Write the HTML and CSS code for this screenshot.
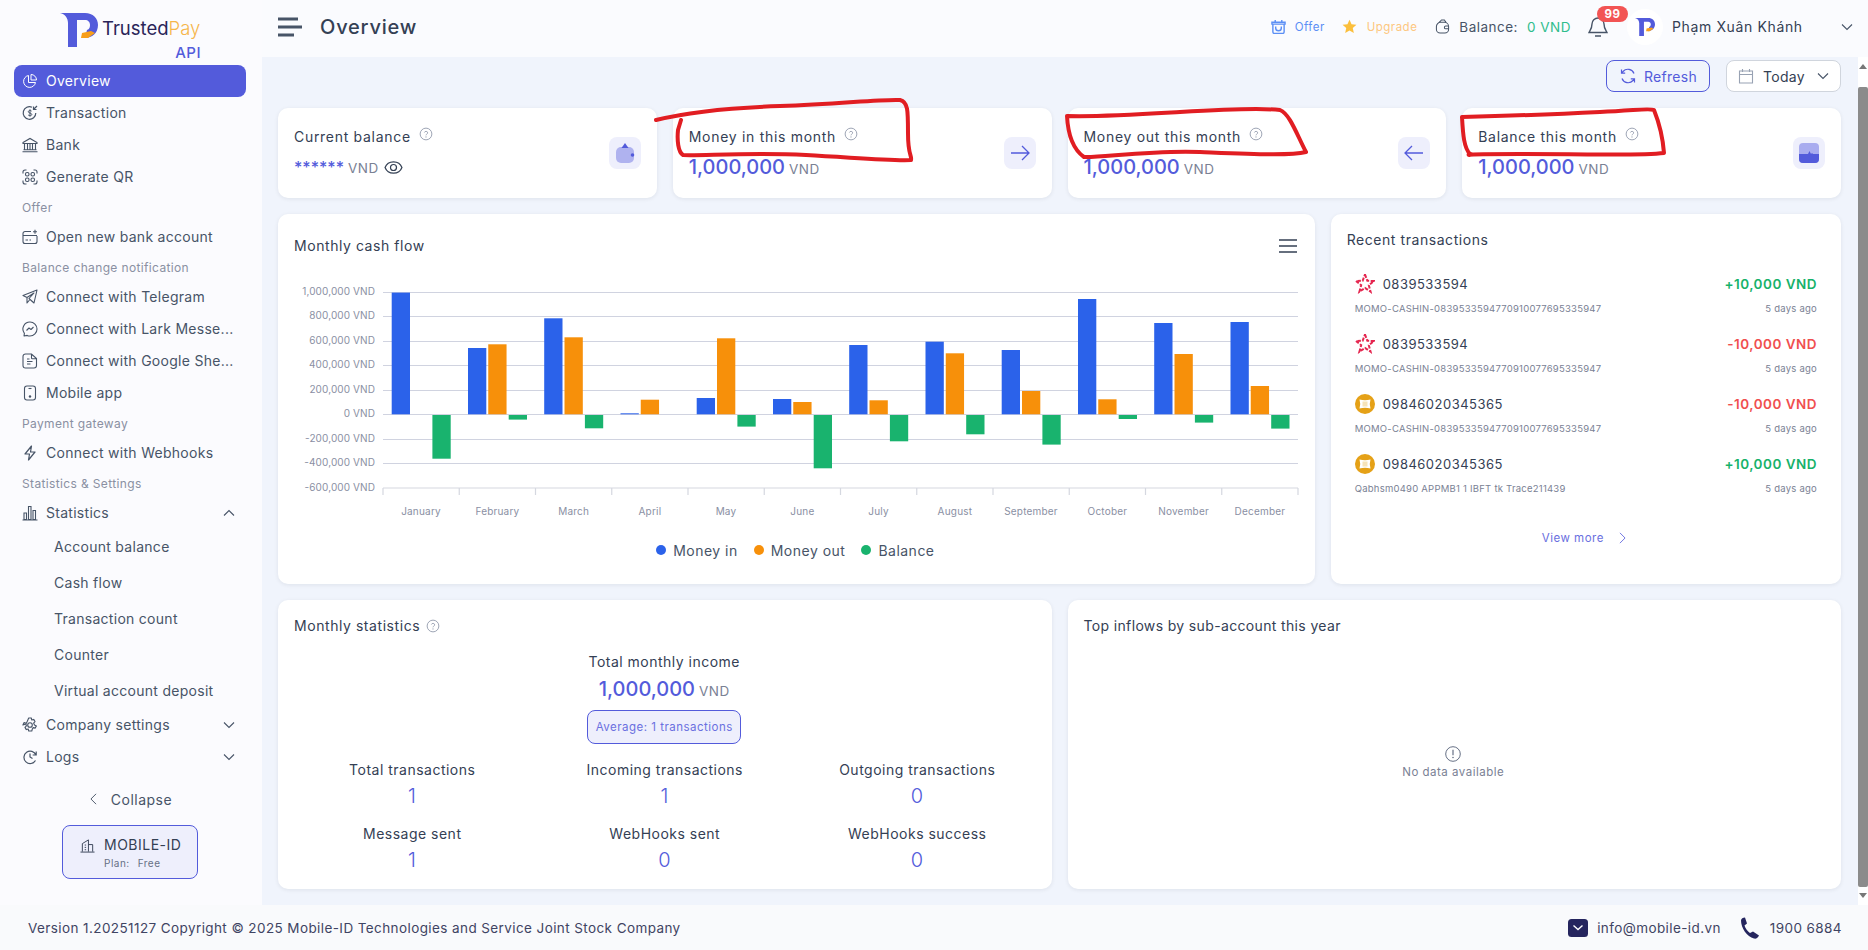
FILE: index.html
```html
<!DOCTYPE html>
<html lang="en">
<head>
<meta charset="utf-8">
<title>Overview</title>
<link rel="stylesheet" href="styles.css">
</head>
<body>
<svg class="defs" width="0" height="0" aria-hidden="true">
  <symbol id="help" viewBox="0 0 16 16"><circle cx="8" cy="8" r="6.7" fill="none" stroke="#9aa1b2" stroke-width="1.1"/><path d="M6.200 6.300a1.900 1.900 0 0 1 3.700.4c0 1.300-1.900 1.500-1.900 2.800" fill="none" stroke="#9aa1b2" stroke-width="1.1"/><circle cx="8" cy="11.400" r=".7" fill="#9aa1b2"/></symbol>
  <symbol id="chev-down" viewBox="0 0 12 12"><path d="M1 3.500l5 5 5-5" fill="none" stroke="currentColor" stroke-width="1.1"/></symbol>
  <symbol id="chev-up" viewBox="0 0 12 12"><path d="M1 8.500l5-5 5 5" fill="none" stroke="currentColor" stroke-width="1.1"/></symbol>
  <symbol id="star-bank" viewBox="0 0 20 20"><polygon points="10,.5 12.350,6.760 19.040,7.060 13.800,11.240 15.580,17.690 10,14 4.420,17.690 6.200,11.240 .96,7.060 7.650,6.760" fill="none" stroke="#e5264f" stroke-width="2" stroke-dasharray="3.500 1.500"/></symbol>
  <symbol id="gold-bank" viewBox="0 0 20 20"><circle cx="10" cy="10" r="10" fill="#e5a117"/><path d="M4.500 5.500q5.500 1.500 11 0-1.500 4.500 0 9-5.500-1.500-11 0 1.500-4.500 0-9z" fill="#fff"/><rect x="7.500" y="7.500" width="5" height="5" fill="#f6e3b8"/></symbol>
  <symbol id="logo-mark" viewBox="0 0 38 34"><path d="M0 0H25C33 0 38 5 38 12C38 20 32 25 25 25L27 17C29.500 16.500 30 14 30 12C30 9 28 7 25 7H17V34H8V10C8 5 5 1 0 0Z" fill="#535bdb"/><path d="M21 25L22 20L31 18L35 20L28 25Z" fill="#f79e1b"/></symbol>
</svg>

<div class="app">
  <aside class="sidebar">
    <div class="logo">
      <svg class="logo-icon"><use href="#logo-mark"/></svg>
      <div class="logo-words">
        <div class="logo-name">Trusted<span class="logo-pay">Pay</span></div>
        <div class="logo-api">API</div>
      </div>
    </div>
    <nav class="nav">
      <a class="nav-item active"><svg class="nav-icon" viewBox="0 0 16 16"><path d="M6.500 2.500a6 6 0 1 0 7 7H6.500z M9 1.500a5.500 5.500 0 0 1 5.500 5.500H9z" fill="none" stroke="currentColor" stroke-width="1"/></svg><span class="nav-text">Overview</span></a>
      <a class="nav-item"><svg class="nav-icon" viewBox="0 0 16 16"><path d="M10 2.200a6.300 6.300 0 1 0 3.800 5.800M15 1l-3.500 3.500M11.500 1.500v3h3" fill="none" stroke="currentColor" stroke-width="1.200"/><path d="M9.600 6.100C8.800 5.200 6.300 5.300 6.300 6.700c0 1.800 3.500 1 3.500 2.800 0 1.400-2.600 1.500-3.600.5M8 4.300v7.300" fill="none" stroke="currentColor" stroke-width="1"/></svg><span class="nav-text">Transaction</span></a>
      <a class="nav-item"><svg class="nav-icon" viewBox="0 0 16 16"><path d="M1 5.500L8 1.500l7 4v1H1zM2.500 6.500v6M5.500 6.500v6M8 6.500v6M10.500 6.500v6M13.500 6.500v6M1.500 12.800h13M.5 14.700h15" fill="none" stroke="currentColor" stroke-width="1.100"/></svg><span class="nav-text">Bank</span></a>
      <a class="nav-item"><svg class="nav-icon" viewBox="0 0 16 16"><g fill="none" stroke="currentColor" stroke-width="1.100"><path d="M1 4.500V3a2 2 0 0 1 2-2h1.500M11.500 1H13a2 2 0 0 1 2 2v1.500M15 11.500V13a2 2 0 0 1-2 2h-1.500M4.500 15H3a2 2 0 0 1-2-2v-1.500"/><rect x="3.500" y="3.500" width="3.500" height="3.500" rx="1.500"/><rect x="9" y="3.500" width="3.500" height="3.500" rx="1.500"/><rect x="3.500" y="9" width="3.500" height="3.500" rx="1.500"/><rect x="9" y="9" width="3.500" height="3.500" rx="1.500"/></g></svg><span class="nav-text">Generate QR</span></a>
      <div class="nav-label">Offer</div>
      <a class="nav-item"><svg class="nav-icon" viewBox="0 0 16 16"><path d="M9 2.500H3a2 2 0 0 0-2 2v8a2 2 0 0 0 2 2h10a2 2 0 0 0 2-2V7M1 6.500h14M13 .8v4M11 2.800h4M3.500 11h2.500M7.500 11h1.500" fill="none" stroke="currentColor" stroke-width="1.100"/></svg><span class="nav-text">Open new bank account</span></a>
      <div class="nav-label">Balance change notification</div>
      <a class="nav-item"><svg class="nav-icon" viewBox="0 0 16 16"><path d="M15 1L1 6.500l4 2L12 4 7 9.500l5 4.500zM5 8.500V14l2.500-3" fill="none" stroke="currentColor" stroke-width="1.100" stroke-linejoin="round"/></svg><span class="nav-text">Connect with Telegram</span></a>
      <a class="nav-item"><svg class="nav-icon" viewBox="0 0 16 16"><path d="M8 1a7 7 0 0 1 0 14c-1 0-2-.2-2.800-.6L2 15l.4-2.700A7 7 0 0 1 8 1zM4.500 9.500l2.500-2.500 2 1.500 2.500-2.500" fill="none" stroke="currentColor" stroke-width="1.100" stroke-linejoin="round"/></svg><span class="nav-text">Connect with Lark Messe...</span></a>
      <a class="nav-item"><svg class="nav-icon" viewBox="0 0 16 16"><path d="M3.500 1h6L14.500 5.500V12.500a2.500 2.500 0 0 1-2.500 2.500H3.500A2.500 2.500 0 0 1 1 12.500v-9A2.500 2.500 0 0 1 3.500 1zM5 6h2.500M5 8.500h5.500M5 11h3.500M9.500 1.500V5a.8.8 0 0 0 .8.8h3.700" fill="none" stroke="currentColor" stroke-width="1.100"/></svg><span class="nav-text">Connect with Google She...</span></a>
      <a class="nav-item"><svg class="nav-icon" viewBox="0 0 16 16"><rect x="2.500" y="1" width="11" height="14" rx="2.500" fill="none" stroke="currentColor" stroke-width="1.100"/><path d="M6.500 3.500h3" stroke="currentColor" stroke-width="1.100"/><circle cx="8" cy="11.500" r="1.200" fill="currentColor"/></svg><span class="nav-text">Mobile app</span></a>
      <div class="nav-label">Payment gateway</div>
      <a class="nav-item"><svg class="nav-icon" viewBox="0 0 16 16"><path d="M9.500 1L3 9h4.500l-1 6L13 7H8.500z" fill="none" stroke="currentColor" stroke-width="1.200" stroke-linejoin="round"/></svg><span class="nav-text">Connect with Webhooks</span></a>
      <div class="nav-label">Statistics &amp; Settings</div>
      <a class="nav-item"><svg class="nav-icon" viewBox="0 0 16 16"><path d="M.5 15h15M2 14.500V8h2.500v6.500zM6.500 14.500V1.500h2.500v13zM11 14.500V5.500h2.500v9z" fill="none" stroke="currentColor" stroke-width="1.100"/></svg><span class="nav-text">Statistics</span><svg class="nav-chev"><use href="#chev-up"/></svg></a>
      <a class="nav-sub">Account balance</a>
      <a class="nav-sub">Cash flow</a>
      <a class="nav-sub">Transaction count</a>
      <a class="nav-sub">Counter</a>
      <a class="nav-sub">Virtual account deposit</a>
      <a class="nav-item"><svg class="nav-icon" viewBox="0 0 16 16"><circle cx="8" cy="8" r="2.300" fill="none" stroke="currentColor" stroke-width="1.100"/><path d="M6.700 1h2.600l.5 2 1.900-.6 1.300 2.200-1.400 1.500.9 1.900 1.900.9-1.300 2.200-1.900-.5-1 1.700-.4 1.700H6.700l-.5-2-1.900.6-1.300-2.200 1.400-1.500-.5-1.900L.9 8 2.100 5.600l2.200.6 1-1.900z" fill="none" stroke="currentColor" stroke-width="1.100" stroke-linejoin="round"/></svg><span class="nav-text">Company settings</span><svg class="nav-chev"><use href="#chev-down"/></svg></a>
      <a class="nav-item"><svg class="nav-icon" viewBox="0 0 16 16"><path d="M13.500 11.500A6.200 6.200 0 1 1 13.900 6M14.200 2.500V6h-3.500M8 4.500V8l2.500 1.500" fill="none" stroke="currentColor" stroke-width="1.200"/></svg><span class="nav-text">Logs</span><svg class="nav-chev"><use href="#chev-down"/></svg></a>
    </nav>
    <div class="collapse"><svg class="collapse-chev" viewBox="0 0 8 14"><path d="M7 1L1 7l6 6" fill="none" stroke="currentColor" stroke-width="1.100"/></svg><span>Collapse</span></div>
    <div class="plan">
      <div class="plan-name"><svg class="plan-icon" viewBox="0 0 16 16"><path d="M.5 15h15M2.500 14.500V6L9 2v12.500M9 7h4.500v7.500M5 7.500h1.500M5 10h1.500M5 12.500h1.500" fill="none" stroke="currentColor" stroke-width="1"/></svg><span>MOBILE-ID</span></div>
      <div class="plan-tier"><span>Plan:</span><span>Free</span></div>
    </div>
  </aside>

  <div class="main">
    <header class="topbar">
      <svg class="burger" viewBox="0 0 24 20"><path d="M0 2h20M0 10h24M0 18h16" stroke="#475467" stroke-width="3" fill="none"/></svg>
      <h1 class="page-title">Overview</h1>
      <div class="top-right">
        <div class="top-link offer"><svg class="top-icon" viewBox="0 0 16 16"><path d="M2 5.500h12v8a2 2 0 0 1-2 2H4a2 2 0 0 1-2-2zM1 3.500h14v2H1zM4.500 3.500V1M11.500 3.500V1M5 8v1.500a3 3 0 0 0 6 0V8" fill="none" stroke="currentColor" stroke-width="1.500"/></svg><span>Offer</span></div>
        <div class="top-link upgrade"><svg class="top-icon" viewBox="0 0 16 16"><path d="M8 .8l2.200 4.800 5.200.6-3.900 3.500 1.100 5.200L8 12.300l-4.600 2.600 1.100-5.200L.6 6.200l5.200-.6z" fill="#fbbf3c"/></svg><span>Upgrade</span></div>
        <div class="top-link balance"><svg class="top-icon wallet-icon" viewBox="0 0 16 16"><path d="M1.500 8a4.500 4.500 0 0 1 4.500-4.500h4A4.500 4.500 0 0 1 14.500 8v3a4 4 0 0 1-4 4h-5a4 4 0 0 1-4-4zM4 4l3-3h3l2 3M14.500 7.500h-3a1.500 1.500 0 0 0 0 3h3" fill="none" stroke="currentColor" stroke-width="1.100"/></svg><span>Balance:</span><span class="balance-value">0 VND</span></div>
        <div class="bell">
          <svg class="bell-icon" viewBox="0 0 20 20"><path d="M10 1a6 6 0 0 1 6 6c0 5 2.500 7 3 8.500H1C1.500 14 4 12 4 7a6 6 0 0 1 6-6zM7 19h6" fill="none" stroke="#475467" stroke-width="1.400"/></svg>
          <span class="badge">99</span>
        </div>
        <div class="avatar"><svg class="avatar-logo"><use href="#logo-mark"/></svg></div>
        <div class="user-name">Phạm Xuân Khánh</div>
        <svg class="user-chev"><use href="#chev-down"/></svg>
      </div>
    </header>

    <div class="workspace">
      <main class="content">
        <div class="toolbar">
          <button class="btn btn-refresh"><svg class="btn-icon" viewBox="0 0 16 16"><path d="M14 5.500A6.500 6.500 0 0 0 3 3.500L1.500 5M2 10.500a6.500 6.500 0 0 0 11 2L14.500 11M1.500 1.500V5.200h3.700M14.500 14.500v-3.700h-3.700" fill="none" stroke="currentColor" stroke-width="1.200"/></svg><span>Refresh</span></button>
          <button class="btn btn-date"><svg class="btn-icon" viewBox="0 0 16 16"><path d="M1.500 3h13v12h-13zM1.500 6.500h13M4.500 1v3M11.500 1v3" fill="none" stroke="#98a2b3" stroke-width="1.100"/></svg><span>Today</span><svg class="date-chev"><use href="#chev-down"/></svg></button>
        </div>

        <div class="grid">
          <section class="card kpi span-3">
            <div class="kpi-body">
              <div class="kpi-title"><span>Current balance</span><svg class="help"><use href="#help"/></svg></div>
              <div class="kpi-value"><span class="stars">******</span><span class="unit">VND</span><svg class="eye" viewBox="0 0 20 16"><path d="M1 8c3-8 15-8 18 0-3 8-15 8-18 0z" fill="none" stroke="#344054" stroke-width="1.300"/><circle cx="10" cy="8" r="3.200" fill="none" stroke="#344054" stroke-width="1.300"/></svg></div>
            </div>
            <div class="kpi-icon"><svg viewBox="0 0 20 20" class="kpi-svg"><rect x="1" y="4" width="18" height="16" rx="5" fill="#afb2ef"/><path d="M6.500 5L10 0l3.500 5z" fill="#535bdb"/><circle cx="17.500" cy="12" r="1.800" fill="#535bdb"/></svg></div>
          </section>
          <section class="card kpi span-3">
            <div class="kpi-body">
              <div class="kpi-title"><span>Money in this month</span><svg class="help"><use href="#help"/></svg></div>
              <div class="kpi-value"><span class="amount">1,000,000</span><span class="unit">VND</span></div>
            </div>
            <div class="kpi-icon"><svg viewBox="0 0 20 16" class="kpi-arrow"><path d="M1 8h18M12 1l7 7-7 7" fill="none" stroke="#535bdb" stroke-width="1.300"/></svg></div>
          </section>
          <section class="card kpi span-3">
            <div class="kpi-body">
              <div class="kpi-title"><span>Money out this month</span><svg class="help"><use href="#help"/></svg></div>
              <div class="kpi-value"><span class="amount">1,000,000</span><span class="unit">VND</span></div>
            </div>
            <div class="kpi-icon"><svg viewBox="0 0 20 16" class="kpi-arrow"><path d="M19 8H1M8 1L1 8l7 7" fill="none" stroke="#535bdb" stroke-width="1.300"/></svg></div>
          </section>
          <section class="card kpi span-3">
            <div class="kpi-body">
              <div class="kpi-title"><span>Balance this month</span><svg class="help"><use href="#help"/></svg></div>
              <div class="kpi-value"><span class="amount">1,000,000</span><span class="unit">VND</span></div>
            </div>
            <div class="kpi-icon"><svg viewBox="0 0 20 20" class="kpi-pulse"><rect width="20" height="20" rx="4" fill="#a9acef"/><path d="M0 11h9l1.500-3 1.500 3 1-1 1 1h6v5a4 4 0 0 1-4 4H4a4 4 0 0 1-4-4z" fill="#535bdb"/></svg></div>
          </section>

          <section class="card chart-card span-8">
            <div class="chart-head">
              <h2 class="card-title">Monthly cash flow</h2>
              <svg class="chart-menu" viewBox="0 0 18 14"><path d="M0 1h18M0 7h18M0 13h18" stroke="#344054" stroke-width="1.700" fill="none"/></svg>
            </div>
            <svg class="chart" viewBox="278 278 1036 252">
              <g class="grid-lines">
                <path d="M383 292.500H1298M383 316.500H1298M383 341.500H1298M383 365.500H1298M383 390.500H1298M383 414.500H1298M383 439.500H1298M383 463.500H1298"/>
              </g>
              <path class="axis" d="M383 488H1298M383 488v7M459.250 488v7M535.500 488v7M611.750 488v7M688 488v7M764.250 488v7M840.500 488v7M916.750 488v7M993 488v7M1069.250 488v7M1145.500 488v7M1221.750 488v7M1298 488v7"/>
              <g class="bars-in">
                <rect x="391.700" y="292.600" width="18.300" height="121.700"/><rect x="468" y="348" width="18.300" height="66.300"/><rect x="544.200" y="318.300" width="18.300" height="96"/><rect x="620.500" y="413.300" width="18.300" height="1"/><rect x="696.700" y="398" width="18.300" height="16.300"/><rect x="773" y="399" width="18.300" height="15.300"/><rect x="849.200" y="345" width="18.300" height="69.300"/><rect x="925.500" y="341.700" width="18.300" height="72.600"/><rect x="1001.700" y="350" width="18.300" height="64.300"/><rect x="1078" y="299" width="18.300" height="115.300"/><rect x="1154.200" y="323" width="18.300" height="91.300"/><rect x="1230.500" y="322" width="18.300" height="92.300"/>
              </g>
              <g class="bars-out">
                <rect x="488.250" y="344.300" width="18.300" height="70"/><rect x="564.500" y="337.300" width="18.300" height="77"/><rect x="640.750" y="399.700" width="18.300" height="14.600"/><rect x="717" y="338.300" width="18.300" height="76"/><rect x="793.250" y="402" width="18.300" height="12.300"/><rect x="869.500" y="400.300" width="18.300" height="14"/><rect x="945.750" y="353.300" width="18.300" height="61"/><rect x="1022" y="391" width="18.300" height="23.300"/><rect x="1098.250" y="399.300" width="18.300" height="15"/><rect x="1174.500" y="354" width="18.300" height="60.300"/><rect x="1250.750" y="386" width="18.300" height="28.300"/>
              </g>
              <g class="bars-bal">
                <rect x="432.400" y="415" width="18.300" height="43.700"/><rect x="508.700" y="415" width="18.300" height="4.600"/><rect x="584.900" y="415" width="18.300" height="13.300"/><rect x="737.400" y="415" width="18.300" height="11.600"/><rect x="813.700" y="415" width="18.300" height="53.300"/><rect x="889.900" y="415" width="18.300" height="26.300"/><rect x="966.200" y="415" width="18.300" height="19.300"/><rect x="1042.400" y="415" width="18.300" height="29.600"/><rect x="1118.700" y="415" width="18.300" height="4"/><rect x="1194.900" y="415" width="18.300" height="7.600"/><rect x="1271.200" y="415" width="18.300" height="13.600"/>
              </g>
              <g class="y-labels">
                <text x="375" y="294.500">1,000,000 VND</text><text x="375" y="318.500">800,000 VND</text><text x="375" y="343.500">600,000 VND</text><text x="375" y="367.500">400,000 VND</text><text x="375" y="392.500">200,000 VND</text><text x="375" y="416.500">0 VND</text><text x="375" y="441.500">-200,000 VND</text><text x="375" y="465.500">-400,000 VND</text><text x="375" y="490.500">-600,000 VND</text>
              </g>
              <g class="x-labels">
                <text x="421" y="515">January</text><text x="497.400" y="515">February</text><text x="573.600" y="515">March</text><text x="649.900" y="515">April</text><text x="726" y="515">May</text><text x="802.400" y="515">June</text><text x="878.600" y="515">July</text><text x="954.900" y="515">August</text><text x="1031" y="515">September</text><text x="1107.400" y="515">October</text><text x="1183.600" y="515">November</text><text x="1259.900" y="515">December</text>
              </g>
            </svg>
            <div class="legend">
              <span class="legend-item"><i class="dot dot-in"></i>Money in</span>
              <span class="legend-item"><i class="dot dot-out"></i>Money out</span>
              <span class="legend-item"><i class="dot dot-bal"></i>Balance</span>
            </div>
          </section>

          <section class="card recent span-4">
            <h2 class="card-title">Recent transactions</h2>
            <ul class="tx-list">
              <li class="tx">
                <div class="tx-top"><svg class="tx-icon"><use href="#star-bank"/></svg><span class="tx-acc">0839533594</span><span class="tx-amt plus">+10,000 VND</span></div>
                <div class="tx-sub"><span>MOMO-CASHIN-0839533594770910077695335947</span><span>5 days ago</span></div>
              </li>
              <li class="tx">
                <div class="tx-top"><svg class="tx-icon"><use href="#star-bank"/></svg><span class="tx-acc">0839533594</span><span class="tx-amt minus">-10,000 VND</span></div>
                <div class="tx-sub"><span>MOMO-CASHIN-0839533594770910077695335947</span><span>5 days ago</span></div>
              </li>
              <li class="tx">
                <div class="tx-top"><svg class="tx-icon"><use href="#gold-bank"/></svg><span class="tx-acc">09846020345365</span><span class="tx-amt minus">-10,000 VND</span></div>
                <div class="tx-sub"><span>MOMO-CASHIN-0839533594770910077695335947</span><span>5 days ago</span></div>
              </li>
              <li class="tx">
                <div class="tx-top"><svg class="tx-icon"><use href="#gold-bank"/></svg><span class="tx-acc">09846020345365</span><span class="tx-amt plus">+10,000 VND</span></div>
                <div class="tx-sub"><span>Qabhsm0490 APPMB1 1 IBFT tk Trace211439</span><span>5 days ago</span></div>
              </li>
            </ul>
            <div class="view-more"><span>View more</span><svg class="view-chev" viewBox="0 0 8 14"><path d="M1 1l6 6-6 6" fill="none" stroke="currentColor" stroke-width="1.100"/></svg></div>
          </section>

          <section class="card stats span-6">
            <div class="stats-head"><h2 class="card-title">Monthly statistics</h2><svg class="help"><use href="#help"/></svg></div>
            <div class="income">
              <div class="income-label">Total monthly income</div>
              <div class="income-value"><span class="amount">1,000,000</span><span class="unit">VND</span></div>
              <div class="income-badge">Average: 1 transactions</div>
            </div>
            <div class="stat-grid">
              <div class="stat"><div class="stat-label">Total transactions</div><div class="stat-num">1</div></div>
              <div class="stat"><div class="stat-label">Incoming transactions</div><div class="stat-num">1</div></div>
              <div class="stat"><div class="stat-label">Outgoing transactions</div><div class="stat-num">0</div></div>
              <div class="stat"><div class="stat-label">Message sent</div><div class="stat-num">1</div></div>
              <div class="stat"><div class="stat-label">WebHooks sent</div><div class="stat-num">0</div></div>
              <div class="stat"><div class="stat-label">WebHooks success</div><div class="stat-num">0</div></div>
            </div>
          </section>

          <section class="card inflows span-6">
            <h2 class="card-title inflows-title">Top inflows by sub-account this year</h2>
            <div class="empty">
              <svg class="empty-icon" viewBox="0 0 16 16"><circle cx="8" cy="8" r="7.300" fill="none" stroke="#667085" stroke-width="1"/><path d="M8 3.800v5.400" stroke="#667085" stroke-width="1.200"/><circle cx="8" cy="11.500" r=".8" fill="#667085"/></svg>
              <div class="empty-text">No data available</div>
            </div>
          </section>
        </div>
      </main>
      <div class="scrollbar">
        <span class="sb-up"></span>
        <span class="sb-thumb"></span>
        <span class="sb-down"></span>
      </div>
    </div>
  </div>
</div>

<footer class="footer">
  <div class="copyright">Version 1.20251127 Copyright © 2025 Mobile-ID Technologies and Service Joint Stock Company</div>
  <div class="contact">
    <svg class="mail-icon" viewBox="0 0 20 18"><rect width="20" height="18" rx="3.500" fill="#25255e"/><path d="M5.500 6.500L10 10.500l4.500-4" fill="none" stroke="#fff" stroke-width="1.400"/></svg>
    <span>info@mobile-id.vn</span>
    <svg class="phone-icon" viewBox="0 0 21 22"><path d="M1 3.500C1 1.500 3 .5 5 .5l2 6-2.500 2c1 3 3 5.500 5.500 7.500l3-1.500 6 4c-1 2.500-3 3.500-5 3C7 20 1 11 1 3.500z" fill="#25255e"/></svg>
    <span>1900 6884</span>
  </div>
</footer>

<svg class="marker" viewBox="0 0 1868 950" aria-hidden="true">
  <path d="M656 120C680 114 720 108 780 106S880 99 900 100C908 102 908 110 908 133S912 155 911 160C890 161 860 158 806 155S700 156 683 155C678 152 677 140 678 130L681 120"/>
  <path d="M1067 116C1100 117 1130 115 1180 112S1262 108 1280 110C1290 114 1297 135 1306 152C1290 156 1250 154 1200 152S1100 158 1084 157C1074 150 1068 135 1067 116Z"/>
  <path d="M1462 117C1500 116 1560 114 1600 112S1650 108 1654 110C1660 125 1663 140 1664 153C1640 156 1600 154 1520 154S1480 156 1470 154C1464 148 1463 135 1462 117Z"/>
</svg>
</body>
</html>
```

FILE: styles.css
```css
* { box-sizing: border-box; }
html, body { margin: 0; padding: 0; }
body {
  width: 1868px;
  height: 950px;
  overflow: hidden;
  position: relative;
  font-family: Inter, "Noto Sans", "Liberation Sans", sans-serif;
  font-size: 14px;
  letter-spacing: .035em;
  color: #344054;
  background: #fff;
}
.defs { position: absolute; }
h1, h2, ul { margin: 0; padding: 0; list-style: none; font: inherit; }
button { font: inherit; letter-spacing: inherit; cursor: pointer; }

.app { display: flex; height: 905px; }

/* Sidebar */
.sidebar { width: 262px; flex: none; background: #fbfbfe; display: flex; flex-direction: column; }
.logo { height: 65px; display: flex; padding: 13px 0 0 60px; }
.logo-icon { width: 38px; height: 34px; flex: none; }
.logo-words { margin-left: 4px; width: 99px; }
.logo-name { font-size: 18.500px; line-height: 30px; color: #2a2458; letter-spacing: 0; font-weight: 400; white-space: nowrap; }
.logo-pay { color: #f6b64c; font-weight: 300; }
.logo-api { font-size: 15px; line-height: 18px; color: #535bdb; text-align: right; margin-top: 1px; font-weight: 500; }

.nav { padding: 0 16px 0 14px; }
.nav-item {
  display: flex; align-items: center; gap: 8px;
  height: 32px; padding: 0 11px 0 8px;
  border-radius: 8px; color: #475467; font-size: 14px; letter-spacing: .02em; line-height: 30px;
}
.nav-item.active { background: #535bdb; color: #fff; }
.nav-icon { width: 16px; height: 16px; flex: none; color: #475467; }
.active .nav-icon { color: #fff; }
.nav-text { flex: 1; min-width: 0; white-space: nowrap; }
.nav-chev { width: 12px; height: 12px; flex: none; color: #475467; margin-left: 2px; }
.nav-label { height: 28px; padding: 7px 0 0 8px; font-size: 12px; line-height: 16px; color: #8a90a2; letter-spacing: .03em; }
.nav-sub { display: block; height: 36px; line-height: 36px; padding-left: 40px; color: #475467; font-size: 14px; letter-spacing: .02em; }

.collapse { display: flex; align-items: center; justify-content: center; gap: 14px; height: 32px; margin: 10px 0 10px; color: #475467; font-size: 14px; }
.collapse-chev { width: 7px; height: 12px; }
.plan { width: 136px; height: 54px; margin-left: 62px; border: 1px solid #535bdb; border-radius: 8px; background: #eeeffc; padding: 9px 0 0 17px; }
.plan-name { display: flex; align-items: center; gap: 9px; font-size: 14px; line-height: 20px; color: #344054; }
.plan-icon { width: 15px; height: 15px; color: #344054; }
.plan-tier { display: flex; gap: 8px; padding-left: 24px; margin-top: 1px; font-size: 10px; line-height: 14px; color: #667085; }

/* Main */
.main { flex: 1; min-width: 0; display: flex; flex-direction: column; }
.topbar { height: 57px; flex: none; display: flex; align-items: center; background: #fafbfe; padding: 0 15px 4px 16px; }
.burger { width: 24px; height: 20px; flex: none; }
.page-title { margin-left: 18px; font-size: 20px; line-height: 28px; font-weight: 500; color: #344054; letter-spacing: .04em; }
.top-right { margin-left: auto; display: flex; align-items: center; }
.top-link { display: flex; align-items: center; }
.top-icon { width: 15px; height: 15px; flex: none; }
.offer { color: #5b8ff5; font-size: 11.500px; gap: 9px; }
.upgrade { color: #fdc780; font-size: 11.500px; gap: 10px; margin-left: 17px; }
.balance { color: #475467; font-size: 13.500px; margin-left: 18px; gap: 9px; }
.wallet-icon { color: #475467; }
.balance-value { color: #2fbd8c; margin-left: 0; }
.bell { position: relative; width: 20px; height: 20px; margin-left: 17px; }
.bell-icon { width: 20px; height: 20px; display: block; }
.badge { position: absolute; left: 9px; top: -11px; width: 31px; height: 16px; border-radius: 8px; background: #f25454; color: #fff; font-size: 11.500px; line-height: 16px; text-align: center; font-weight: 700; }
.avatar { width: 36px; height: 36px; border-radius: 50%; background: #fff; margin-left: 19px; display: flex; align-items: center; justify-content: center; }
.avatar-logo { width: 20px; height: 20px; }
.user-name { margin-left: 9px; width: 169px; font-size: 14px; color: #344054; letter-spacing: .045em; white-space: nowrap; }
.user-chev { width: 12px; height: 12px; color: #475467; }

.workspace { flex: 1; min-height: 0; display: flex; }
.content { flex: 1; min-width: 0; background: #f0f4fc; padding: 3px 17px 16px 16px; }
.scrollbar { width: 10px; flex: none; background: #fff; display: flex; flex-direction: column; align-items: center; }
.sb-up { margin-top: 7px; width: 0; height: 0; border: 4px solid transparent; border-top: 0; border-bottom: 5px solid #777; }
.sb-thumb { width: 10px; margin-top: 18px; height: 800px; background: #8b8b8b; border-radius: 2px; }
.sb-down { margin-top: 6px; width: 0; height: 0; border: 4px solid transparent; border-bottom: 0; border-top: 5px solid #777; }

.toolbar { display: flex; justify-content: flex-end; gap: 16px; height: 32px; margin-bottom: 16px; }
.btn { display: flex; align-items: center; border-radius: 8px; background: transparent; padding: 0; height: 32px; }
.btn-refresh { width: 104px; padding-left: 13px; gap: 8px; border: 1px solid #535bdb; color: #535bdb; font-size: 14px; letter-spacing: .02em; }
.btn-date { width: 115px; padding: 0 11px; gap: 9px; border: 1px solid #d0d5dd; background: #fff; color: #344054; font-size: 14px; letter-spacing: .02em; }
.btn-icon { width: 16px; height: 16px; flex: none; }
.date-chev { width: 12px; height: 12px; margin-left: auto; color: #475467; flex: none; }

.grid { display: grid; grid-template-columns: repeat(12, 1fr); grid-template-rows: 90px 370px 289px; gap: 16px; }
.span-3 { grid-column: span 3; }
.span-4 { grid-column: span 4; }
.span-6 { grid-column: span 6; }
.span-8 { grid-column: span 8; }
.card { background: #fff; border-radius: 10px; box-shadow: 0 1px 4px rgba(16, 24, 40, .08); min-width: 0; }
.card-title { font-size: 14px; line-height: 20px; font-weight: 400; color: #344054; letter-spacing: .04em; }
.inflows-title { letter-spacing: .025em; }

.kpi { display: flex; align-items: center; padding: 0 16px; }
.kpi-body { flex: 1; min-width: 0; align-self: flex-start; padding-top: 19px; }
.kpi-title { display: flex; align-items: flex-start; gap: 8px; height: 20px; line-height: 20px; font-size: 14px; letter-spacing: .05em; font-weight: 400; }
.help { width: 14px; height: 14px; flex: none; margin-top: 0; }
.kpi-value { display: flex; align-items: baseline; gap: 4px; margin-top: 8px; height: 24px; line-height: 24px; }
.amount { font-size: 20px; line-height: 24px; color: #535bdb; font-weight: 500; letter-spacing: 0; }
.unit { font-size: 13.500px; color: #7a8194; }
.stars { font-size: 16px; color: #535bdb; font-weight: 500; letter-spacing: 0; }
.eye { width: 19px; height: 15px; align-self: center; margin-left: 1px; }
.kpi-icon { width: 32px; height: 32px; flex: none; border-radius: 8px; background: #eeeffc; display: flex; align-items: center; justify-content: center; }
.kpi-svg { width: 20px; height: 20px; }
.kpi-arrow { width: 20px; height: 16px; }
.kpi-pulse { width: 20px; height: 20px; }

.chart-card { display: flex; flex-direction: column; }
.chart-head { height: 64px; flex: none; display: flex; align-items: center; justify-content: space-between; padding: 0 18px 0 16px; }
.chart-menu { width: 18px; height: 14px; }
.chart { display: block; width: 1036px; height: 252px; flex: none; }
.grid-lines path { stroke: #d0d3e0; stroke-width: 1; fill: none; }
.axis { stroke: #d5d8e0; stroke-width: 1.200; fill: none; }
.bars-in rect { fill: #2b62ea; }
.bars-out rect { fill: #f7900a; }
.bars-bal rect { fill: #19b36e; }
.y-labels text { text-anchor: end; font-size: 10px; fill: #8a8fa3; letter-spacing: .01em; }
.x-labels text { text-anchor: middle; font-size: 10px; fill: #8a8fa3; letter-spacing: .02em; }
.legend { display: flex; justify-content: center; gap: 16px; height: 40px; align-items: center; padding-right: 2px; }
.legend-item { display: flex; align-items: center; gap: 7px; font-size: 14px; color: #475467; }
.dot { width: 10px; height: 10px; border-radius: 50%; }
.dot-in { background: #2b62ea; }
.dot-out { background: #f7900a; }
.dot-bal { background: #19b36e; }

.recent { padding: 16px; }
.tx-list { margin-top: 18px; }
.tx { height: 60px; padding: 6px 8px 0; }
.tx-top { display: flex; align-items: center; height: 20px; }
.tx-icon { width: 20px; height: 20px; flex: none; }
.tx-acc { margin-left: 8px; font-size: 13px; color: #344054; }
.tx-amt { margin-left: auto; font-size: 13.500px; font-weight: 600; }
.plus { color: #17b26a; }
.minus { color: #f04f4f; }
.tx-sub { display: flex; justify-content: space-between; margin-top: 7px; font-size: 9.500px; line-height: 16px; color: #7a8194; letter-spacing: .025em; }
.view-more { display: flex; align-items: center; justify-content: center; gap: 15px; margin-top: 20px; height: 20px; color: #6a70e0; font-size: 11.500px; padding-right: 4px; }
.view-chev { width: 7px; height: 12px; }

.stats { padding: 16px; }
.stats-head { display: flex; align-items: center; gap: 6px; height: 20px; }
.income { display: flex; flex-direction: column; align-items: center; margin-top: 16px; padding-right: 1px; }
.income-label { font-size: 14px; line-height: 20px; }
.income-value { display: flex; align-items: baseline; gap: 4px; height: 28px; line-height: 28px; margin-top: 5px; }
.income-badge { width: 154px; height: 34px; margin-top: 5px; border: 1px solid #535bdb; border-radius: 8px; background: #eeeffc; color: #6a70e0; font-size: 11.500px; line-height: 32px; text-align: center; }
.stat-grid { display: grid; grid-template-columns: repeat(3, 1fr); gap: 16px 0; margin: 16px -8px 0 -8px; }
.stat { text-align: center; }
.stat-label { font-size: 14px; line-height: 20px; }
.stat-num { font-size: 20px; line-height: 24px; margin-top: 4px; color: #535bdb; font-weight: 300; }

.inflows { padding: 16px 16px 0; display: flex; flex-direction: column; }
.empty { flex: 1; display: flex; flex-direction: column; align-items: center; justify-content: center; padding-right: 2px; }
.empty-icon { width: 16px; height: 16px; }
.empty-text { margin-top: 2px; font-size: 11.500px; line-height: 16px; color: #7a8194; }

.footer { height: 45px; background: #f9fafc; display: flex; align-items: center; justify-content: space-between; padding: 0 26px 0 28px; font-size: 13.500px; color: #3f4463; letter-spacing: .03em; }
.contact { display: flex; align-items: center; }
.mail-icon { width: 20px; height: 18px; margin-right: 9px; }
.phone-icon { width: 21px; height: 22px; margin: 0 9px 0 19px; }

.marker { position: absolute; inset: 0; width: 1868px; height: 950px; pointer-events: none; }
.marker path { fill: none; stroke: #e11d22; stroke-width: 4; stroke-linecap: round; stroke-linejoin: round; }
```
